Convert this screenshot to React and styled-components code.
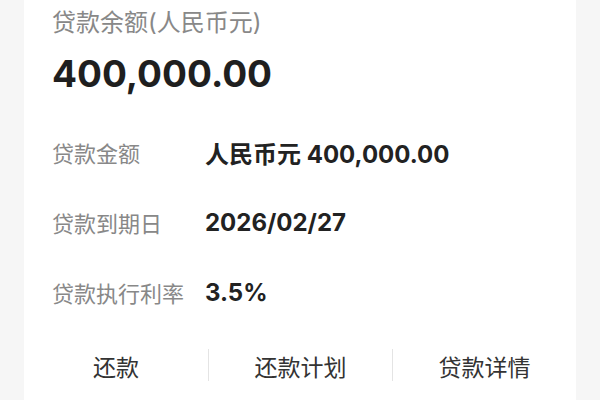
import React from 'react';
import styled, { createGlobalStyle } from 'styled-components';

const GlobalStyle = createGlobalStyle`
  html, body {
    margin: 0;
    padding: 0;
    height: 100%;
    background: #f6f6f6;
  }

  body {
    font-family: Inter, "Noto Sans CJK SC", sans-serif;
    -webkit-font-smoothing: antialiased;
  }

  #root {
    height: 100%;
  }
`;

const Page = styled.div`
  height: 400px;
  padding: 0 24px;
  box-sizing: border-box;
  overflow: hidden;
`;

const Card = styled.section`
  height: 100%;
  background: #ffffff;
  display: flex;
  flex-direction: column;
`;

const Summary = styled.div`
  padding: 7px 28px 0;
`;

const SummaryLabel = styled.div`
  font-size: 24px;
  line-height: 32px;
  color: #888888;
`;

const SummaryAmount = styled.div`
  margin-top: 12px;
  font-size: 37px;
  line-height: 46px;
  font-weight: 700;
  color: #1f1f1f;
`;

const InfoList = styled.dl`
  margin: 20px 0 0;
  padding: 0 28px;
  display: grid;
  grid-template-columns: 153px 1fr;
  grid-auto-rows: 70px;
  align-items: center;
`;

const InfoLabel = styled.dt`
  font-size: 22px;
  color: #888888;
  white-space: nowrap;
`;

const InfoValue = styled.dd`
  margin: 0;
  font-size: 24px;
  font-weight: 700;
  color: #222222;
  white-space: nowrap;
`;

const Actions = styled.nav`
  margin-top: 22px;
  display: grid;
  grid-template-columns: repeat(3, 1fr);
`;

const Action = styled.button`
  height: 32px;
  border: 0;
  background: transparent;
  font-family: inherit;
  font-size: 23px;
  color: #333333;
  padding: 0;
  cursor: pointer;
  border-left: ${({ $divided }) => ($divided ? '1px solid #e4e4e4' : '0')};
`;

const rows = [
  { label: '贷款金额', value: '人民币元 400,000.00' },
  { label: '贷款到期日', value: '2026/02/27' },
  { label: '贷款执行利率', value: '3.5%' },
];

const actions = ['还款', '还款计划', '贷款详情'];

const App = () => (
  <>
    <GlobalStyle />
    <Page>
      <Card>
        <Summary>
          <SummaryLabel>贷款余额(人民币元)</SummaryLabel>
          <SummaryAmount>400,000.00</SummaryAmount>
        </Summary>

        <InfoList>
          {rows.map(row => (
            <React.Fragment key={row.label}>
              <InfoLabel>{row.label}</InfoLabel>
              <InfoValue>{row.value}</InfoValue>
            </React.Fragment>
          ))}
        </InfoList>

        <Actions>
          {actions.map((label, i) => (
            <Action key={label} $divided={i > 0}>
              {label}
            </Action>
          ))}
        </Actions>
      </Card>
    </Page>
  </>
);

export default App;
